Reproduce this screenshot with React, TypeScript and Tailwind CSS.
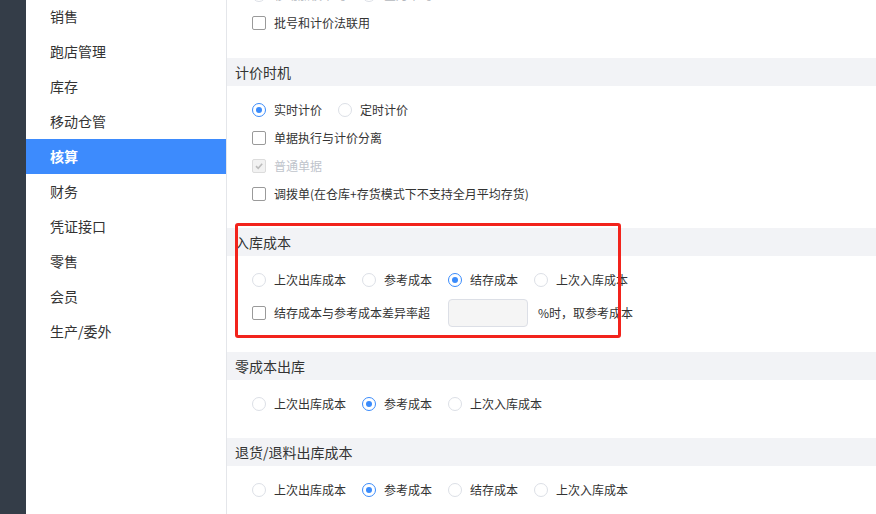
import React from "react";

const font = { fontFamily: '"Noto Sans CJK SC", "Noto Sans", sans-serif' };

function Radio({ label, checked = false, muted = false }: { label: string; checked?: boolean; muted?: boolean }) {
  return (
    <div className="flex items-center mr-[16px]">
      <span
        className={
          "w-[14px] h-[14px] rounded-full border bg-white flex items-center justify-center shrink-0 " +
          (checked ? "border-[#3a8bfb]" : "border-[#dcdfe6]")
        }
      >
        {checked && <span className="w-[6px] h-[6px] rounded-full bg-[#3a8bfb]" />}
      </span>
      <span className={"ml-[8px] text-[12px] leading-none " + (muted ? "text-[#b5b8bd]" : "text-[#333]")}>{label}</span>
    </div>
  );
}

function Checkbox({ label, disabled = false }: { label: string; disabled?: boolean }) {
  return (
    <div className="flex items-center">
      {disabled ? (
        <span className="w-[14px] h-[14px] rounded-[2px] border border-[#dcdcdc] bg-[#f2f2f2] flex items-center justify-center shrink-0">
          <svg width="10" height="10" viewBox="0 0 10 10">
            <path d="M2 5.2 L4.2 7.3 L8.2 2.8" fill="none" stroke="#bcbcbc" strokeWidth="1.6" />
          </svg>
        </span>
      ) : (
        <span className="w-[14px] h-[14px] rounded-[2px] border border-[#9a9a9a] bg-white shrink-0" />
      )}
      <span className={"ml-[8px] text-[12px] leading-none " + (disabled ? "text-[#c0c4cc]" : "text-[#333]")}>{label}</span>
    </div>
  );
}

function Header({ title }: { title: string }) {
  return (
    <div className="h-[28px] bg-[#f2f3f6] flex items-center pl-[8px] text-[14px] text-[#333]">{title}</div>
  );
}

function Row({ children, h = "h-[28px]" }: { children: React.ReactNode; h?: string }) {
  return <div className={"flex items-center pl-[25px] " + h}>{children}</div>;
}

const menu = ["销售", "跑店管理", "库存", "移动仓管", "核算", "财务", "凭证接口", "零售", "会员", "生产/委外"];

export default function App() {
  return (
    <div className="w-[876px] h-[514px] overflow-hidden flex bg-white" style={font}>
      <div className="w-[26px] bg-[#343d48] shrink-0" />
      <div className="w-[201px] shrink-0 border-r border-[#e4e6ea] bg-white">
        <div className="mt-[-1px]">
          {menu.map((m) => (
            <div
              key={m}
              className={
                "h-[35px] flex items-center pl-[24px] text-[14px] " +
                (m === "核算" ? "bg-[#3d8bfd] text-white font-bold" : "text-[#333]")
              }
            >
              {m}
            </div>
          ))}
        </div>
      </div>
      <div className="flex-1 relative">
        <div className="mt-[-19px] pb-[21px]">
          <Row>
            <Radio label="移动加权平均" muted />
            <Radio label="全月平均" muted />
          </Row>
          <Row>
            <Checkbox label="批号和计价法联用" />
          </Row>
        </div>
        <Header title="计价时机" />
        <div className="pt-[10px] pb-[20px]">
          <Row>
            <Radio label="实时计价" checked />
            <Radio label="定时计价" />
          </Row>
          <Row>
            <Checkbox label="单据执行与计价分离" />
          </Row>
          <Row>
            <Checkbox label="普通单据" disabled />
          </Row>
          <Row>
            <Checkbox label="调拨单(在仓库+存货模式下不支持全月平均存货)" />
          </Row>
        </div>
        <Header title="入库成本" />
        <div className="pt-[10px] pb-[20px]">
          <Row>
            <Radio label="上次出库成本" />
            <Radio label="参考成本" />
            <Radio label="结存成本" checked />
            <Radio label="上次入库成本" />
          </Row>
          <Row h="h-[38px]">
            <Checkbox label="结存成本与参考成本差异率超" />
            <div className="ml-[18px] w-[80px] h-[28px] rounded-[4px] border border-[#dcdfe6] bg-[#f5f5f5]" />
            <span className="ml-[10px] text-[12px] text-[#333]">%时，取参考成本</span>
          </Row>
        </div>
        <Header title="零成本出库" />
        <div className="pt-[10px] pb-[20px]">
          <Row>
            <Radio label="上次出库成本" />
            <Radio label="参考成本" checked />
            <Radio label="上次入库成本" />
          </Row>
        </div>
        <Header title="退货/退料出库成本" />
        <div className="pt-[10px] pb-[20px]">
          <Row>
            <Radio label="上次出库成本" />
            <Radio label="参考成本" checked />
            <Radio label="结存成本" />
            <Radio label="上次入库成本" />
          </Row>
        </div>
        <div className="absolute left-[8px] top-[223px] w-[386px] h-[115px] border-[3px] border-[#f2231c] rounded-[3px] pointer-events-none" />
      </div>
    </div>
  );
}
